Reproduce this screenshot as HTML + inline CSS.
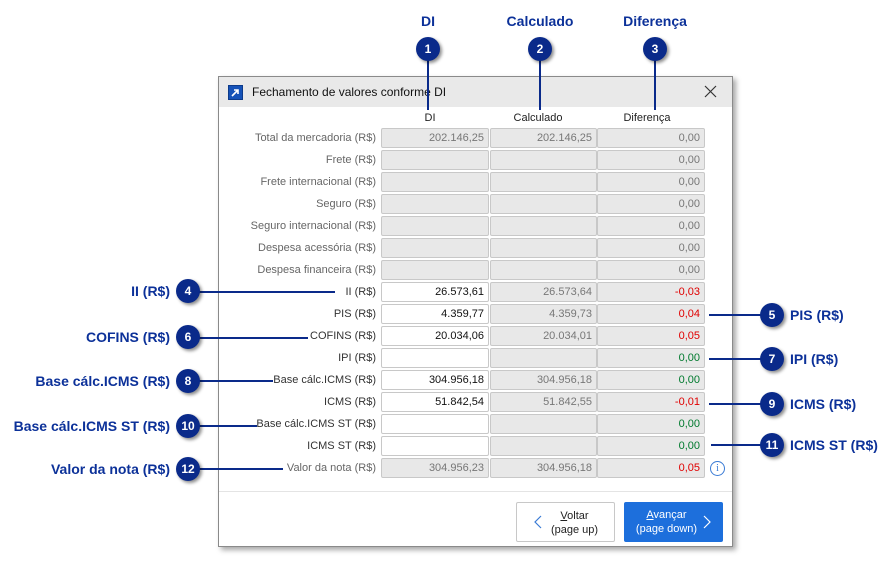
<!DOCTYPE html>
<html><head><meta charset="utf-8"><style>
*{margin:0;padding:0;box-sizing:border-box}
body{width:896px;height:563px;background:#fff;position:relative;overflow:hidden;font-family:"Liberation Sans","DejaVu Sans",sans-serif}
.a{position:absolute}
.dlg{left:218px;top:76px;width:515px;height:471px;border:1px solid #8a8a8a;background:#fff;box-shadow:3px 3px 5px rgba(0,0,0,.35)}
.tb{left:0;top:0;width:513px;height:30px;background:#e9e9e9}
.lbl{font-size:11px;color:#666;text-align:right;width:200px;left:176px;line-height:20px}
.f{height:20px;border:1px solid #c8c8c8;border-radius:2px;background:#e8e8e8;font-size:11px;line-height:18px;text-align:right;padding-right:4px;color:#777}
.w{background:#fff;color:#111}
.r{color:#e00000}.g{color:#007a2e}
.c{width:24px;height:24px;border-radius:50%;background:#0a2a8a;color:#fff;font-weight:bold;font-size:12px;text-align:center;line-height:24px;box-shadow:2px 2px 3px rgba(0,0,0,.45)}
.t{color:#0c3199;font-weight:bold;font-size:14px;white-space:nowrap}
.ln{background:#0a2a8a}
.hd{font-size:11px;color:#222;text-align:center;width:100px}
</style></head><body>
<div class="a dlg">
 <div class="a tb"></div>
 <div class="a" style="left:9px;top:8px;width:15px;height:15px;background:#1552b8;border:1px solid #0d3b8a"><svg width="13" height="13" viewBox="0 0 13 13"><path d="M3 10 L9 4 M5 4 H9 V8" stroke="#fff" stroke-width="1.6" fill="none"/></svg></div>
 <div class="a" style="left:33px;top:8px;font-size:12px;color:#111">Fechamento de valores conforme DI</div>
 <svg class="a" style="left:485px;top:8px" width="13" height="13"><path d="M1 1 L12 12 M12 1 L1 12" stroke="#333" stroke-width="1.2"/></svg>
 <div class="a" style="left:0;top:414px;width:513px;height:1px;background:#e4e4e4"></div>
 <div class="a" style="left:297px;top:425px;width:99px;height:40px;border:1px solid #c8c8c8;border-radius:2px;background:#fff;font-size:11px;color:#222;text-align:center;line-height:14px;padding-top:6px;padding-left:18px"><u>V</u>oltar<br>(page up)</div>
 <svg class="a" style="left:315px;top:438px" width="8" height="14"><path d="M7 1 L1 7 L7 13" stroke="#3a7bd5" stroke-width="1.2" fill="none"/></svg>
 <div class="a" style="left:405px;top:425px;width:99px;height:40px;border-radius:2px;background:#1d6fdc;font-size:11px;color:#fff;text-align:center;line-height:14px;padding-top:6px;padding-right:14px"><u>A</u>vançar<br>(page down)</div>
 <svg class="a" style="left:484px;top:438px" width="8" height="14"><path d="M1 1 L7 7 L1 13" stroke="#fff" stroke-width="1.2" fill="none"/></svg>
</div>
<div class="a hd" style="left:380px;top:112px">DI</div>
<div class="a hd" style="left:488px;top:112px">Calculado</div>
<div class="a hd" style="left:597px;top:112px">Diferença</div>

<div class="a lbl" style="top:128px">Total da mercadoria (R$)</div>
<div class="a f" style="left:381px;top:128px;width:108px">202.146,25</div><div class="a f" style="left:490px;top:128px;width:107px">202.146,25</div><div class="a f" style="left:597px;top:128px;width:108px">0,00</div>
<div class="a lbl" style="top:150px">Frete (R$)</div>
<div class="a f" style="left:381px;top:150px;width:108px"></div><div class="a f" style="left:490px;top:150px;width:107px"></div><div class="a f" style="left:597px;top:150px;width:108px">0,00</div>
<div class="a lbl" style="top:172px">Frete internacional (R$)</div>
<div class="a f" style="left:381px;top:172px;width:108px"></div><div class="a f" style="left:490px;top:172px;width:107px"></div><div class="a f" style="left:597px;top:172px;width:108px">0,00</div>
<div class="a lbl" style="top:194px">Seguro (R$)</div>
<div class="a f" style="left:381px;top:194px;width:108px"></div><div class="a f" style="left:490px;top:194px;width:107px"></div><div class="a f" style="left:597px;top:194px;width:108px">0,00</div>
<div class="a lbl" style="top:216px">Seguro internacional (R$)</div>
<div class="a f" style="left:381px;top:216px;width:108px"></div><div class="a f" style="left:490px;top:216px;width:107px"></div><div class="a f" style="left:597px;top:216px;width:108px">0,00</div>
<div class="a lbl" style="top:238px">Despesa acessória (R$)</div>
<div class="a f" style="left:381px;top:238px;width:108px"></div><div class="a f" style="left:490px;top:238px;width:107px"></div><div class="a f" style="left:597px;top:238px;width:108px">0,00</div>
<div class="a lbl" style="top:260px">Despesa financeira (R$)</div>
<div class="a f" style="left:381px;top:260px;width:108px"></div><div class="a f" style="left:490px;top:260px;width:107px"></div><div class="a f" style="left:597px;top:260px;width:108px">0,00</div>
<div class="a lbl" style="top:282px;color:#333">II (R$)</div>
<div class="a f w" style="left:381px;top:282px;width:108px">26.573,61</div><div class="a f" style="left:490px;top:282px;width:107px">26.573,64</div><div class="a f r" style="left:597px;top:282px;width:108px">-0,03</div>
<div class="a lbl" style="top:304px;color:#333">PIS (R$)</div>
<div class="a f w" style="left:381px;top:304px;width:108px">4.359,77</div><div class="a f" style="left:490px;top:304px;width:107px">4.359,73</div><div class="a f r" style="left:597px;top:304px;width:108px">0,04</div>
<div class="a lbl" style="top:326px;color:#333">COFINS (R$)</div>
<div class="a f w" style="left:381px;top:326px;width:108px">20.034,06</div><div class="a f" style="left:490px;top:326px;width:107px">20.034,01</div><div class="a f r" style="left:597px;top:326px;width:108px">0,05</div>
<div class="a lbl" style="top:348px;color:#333">IPI (R$)</div>
<div class="a f w" style="left:381px;top:348px;width:108px"></div><div class="a f" style="left:490px;top:348px;width:107px"></div><div class="a f g" style="left:597px;top:348px;width:108px">0,00</div>
<div class="a lbl" style="top:370px;color:#333">Base cálc.ICMS (R$)</div>
<div class="a f w" style="left:381px;top:370px;width:108px">304.956,18</div><div class="a f" style="left:490px;top:370px;width:107px">304.956,18</div><div class="a f g" style="left:597px;top:370px;width:108px">0,00</div>
<div class="a lbl" style="top:392px;color:#333">ICMS (R$)</div>
<div class="a f w" style="left:381px;top:392px;width:108px">51.842,54</div><div class="a f" style="left:490px;top:392px;width:107px">51.842,55</div><div class="a f r" style="left:597px;top:392px;width:108px">-0,01</div>
<div class="a lbl" style="top:414px;color:#333">Base cálc.ICMS ST (R$)</div>
<div class="a f w" style="left:381px;top:414px;width:108px"></div><div class="a f" style="left:490px;top:414px;width:107px"></div><div class="a f g" style="left:597px;top:414px;width:108px">0,00</div>
<div class="a lbl" style="top:436px;color:#333">ICMS ST (R$)</div>
<div class="a f w" style="left:381px;top:436px;width:108px"></div><div class="a f" style="left:490px;top:436px;width:107px"></div><div class="a f g" style="left:597px;top:436px;width:108px">0,00</div>
<div class="a lbl" style="top:458px">Valor da nota (R$)</div>
<div class="a f" style="left:381px;top:458px;width:108px">304.956,23</div><div class="a f" style="left:490px;top:458px;width:107px">304.956,18</div><div class="a f r" style="left:597px;top:458px;width:108px">0,05</div>
<div class="a" style="left:710px;top:461px;width:15px;height:15px;border:1px solid #3a7bd5;border-radius:50%;color:#3a7bd5;font-size:10px;text-align:center;line-height:13px;font-family:'Liberation Serif',serif">i</div>

<div class="a t" style="left:378px;top:13px;width:100px;text-align:center">DI</div>
<div class="a t" style="left:490px;top:13px;width:100px;text-align:center">Calculado</div>
<div class="a t" style="left:605px;top:13px;width:100px;text-align:center">Diferença</div>
<div class="a ln" style="left:427px;top:48px;width:1.5px;height:62px"></div>
<div class="a ln" style="left:539px;top:48px;width:1.5px;height:62px"></div>
<div class="a ln" style="left:654px;top:48px;width:1.5px;height:62px"></div>
<div class="a c" style="left:416px;top:37px">1</div>
<div class="a c" style="left:528px;top:37px">2</div>
<div class="a c" style="left:643px;top:37px">3</div>

<div class="a ln" style="left:187px;top:291px;width:148px;height:1.5px"></div>
<div class="a ln" style="left:187px;top:337px;width:121px;height:1.5px"></div>
<div class="a ln" style="left:187px;top:380px;width:86px;height:1.5px"></div>
<div class="a ln" style="left:187px;top:425px;width:70px;height:1.5px"></div>
<div class="a ln" style="left:187px;top:468px;width:96px;height:1.5px"></div>
<div class="a c" style="left:176px;top:279px">4</div>
<div class="a c" style="left:176px;top:325px">6</div>
<div class="a c" style="left:176px;top:369px">8</div>
<div class="a c" style="left:176px;top:414px">10</div>
<div class="a c" style="left:176px;top:457px">12</div>
<div class="a t" style="right:726px;top:283px">II (R$)</div>
<div class="a t" style="right:726px;top:329px">COFINS (R$)</div>
<div class="a t" style="right:726px;top:373px">Base cálc.ICMS (R$)</div>
<div class="a t" style="right:726px;top:418px">Base cálc.ICMS ST (R$)</div>
<div class="a t" style="right:726px;top:461px">Valor da nota (R$)</div>

<div class="a ln" style="left:709px;top:314px;width:62px;height:1.5px"></div>
<div class="a ln" style="left:709px;top:358px;width:62px;height:1.5px"></div>
<div class="a ln" style="left:709px;top:403px;width:62px;height:1.5px"></div>
<div class="a ln" style="left:711px;top:444px;width:60px;height:1.5px"></div>
<div class="a c" style="left:760px;top:303px">5</div>
<div class="a c" style="left:760px;top:347px">7</div>
<div class="a c" style="left:760px;top:392px">9</div>
<div class="a c" style="left:760px;top:433px">11</div>
<div class="a t" style="left:790px;top:307px">PIS (R$)</div>
<div class="a t" style="left:790px;top:351px">IPI (R$)</div>
<div class="a t" style="left:790px;top:396px">ICMS (R$)</div>
<div class="a t" style="left:790px;top:437px">ICMS ST (R$)</div>
</body></html>
